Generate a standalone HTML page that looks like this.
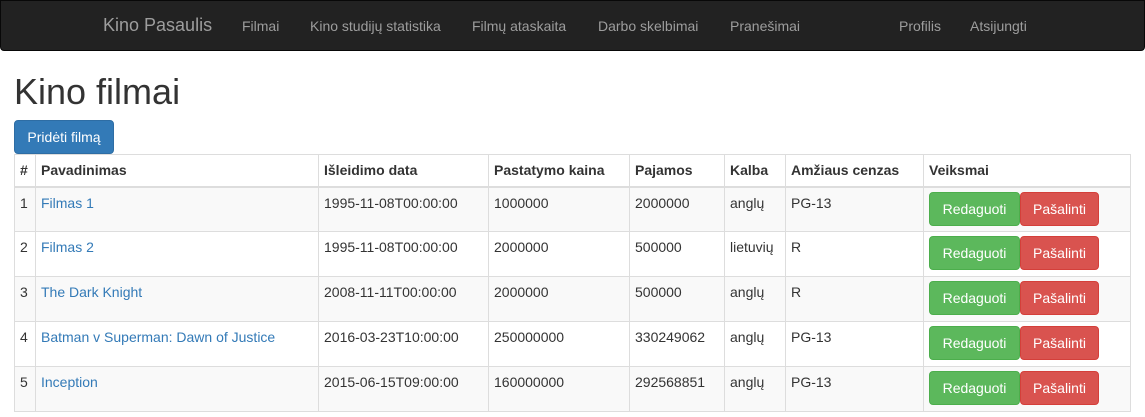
<!DOCTYPE html>
<html><head><meta charset="utf-8"><style>
*{box-sizing:border-box}
body{margin:0;font-family:"Liberation Sans",Arial,sans-serif;font-size:14px;color:#333;background:#fff;width:1145px;height:417px;overflow:hidden;position:relative}
.nav{position:absolute;left:0;top:0;width:1145px;height:51px;background:#222;border:1px solid #080808;border-radius:0 0 4px 4px}
.nav span{position:absolute;top:16px;color:#9d9d9d;font-size:14px;line-height:18px;white-space:nowrap}
.nav .brand{font-size:18px;top:15px}
h1{position:absolute;left:14px;top:72px;margin:0;font-size:36px;font-weight:500;line-height:40px}
.add{position:absolute;left:14px;top:120px;width:100px;height:34px;background:#337ab7;border:1px solid #2e6da4;border-radius:4px;color:#fff;line-height:32px;text-align:center}
table{position:absolute;left:14px;top:154px;width:1117px;border-collapse:collapse;border:1px solid #ddd}
th,td{border:1px solid #ddd;padding:6px 5px 8px;text-align:left;vertical-align:top;line-height:18px;white-space:nowrap}
th{border-bottom:2px solid #ddd;height:32px;padding:6px 5px}
td{height:45px}
tr.s td{background:#f9f9f9}
a{color:#337ab7;text-decoration:none}
td.b{padding:4px 5px 0 5px}
.btn{display:inline-block;height:34px;line-height:32px;border-radius:4px;color:#fff;text-align:center;vertical-align:top}
.g{width:91px;background:#5cb85c;border:1px solid #4cae4c}
.r{width:79px;background:#d9534f;border:1px solid #d43f3a}
</style></head><body>
<div class="nav">
<span class="brand" style="left:102px">Kino Pasaulis</span>
<span style="left:241px">Filmai</span>
<span style="left:309px">Kino studijų statistika</span>
<span style="left:471px">Filmų ataskaita</span>
<span style="left:597px">Darbo skelbimai</span>
<span style="left:729px">Pranešimai</span>
<span style="left:898px">Profilis</span>
<span style="left:969px">Atsijungti</span>
</div>
<h1>Kino filmai</h1>
<div class="add">Pridėti filmą</div>
<table>
<colgroup><col style="width:21px"><col style="width:283px"><col style="width:170px"><col style="width:141px"><col style="width:95px"><col style="width:61px"><col style="width:138px"><col></colgroup>
<tr><th>#</th><th>Pavadinimas</th><th>Išleidimo data</th><th>Pastatymo kaina</th><th>Pajamos</th><th>Kalba</th><th>Amžiaus cenzas</th><th>Veiksmai</th></tr>
<tr class="s"><td>1</td><td><a>Filmas 1</a></td><td>1995-11-08T00:00:00</td><td>1000000</td><td>2000000</td><td>anglų</td><td>PG-13</td><td class="b"><span class="btn g">Redaguoti</span><span class="btn r">Pašalinti</span></td></tr>
<tr><td>2</td><td><a>Filmas 2</a></td><td>1995-11-08T00:00:00</td><td>2000000</td><td>500000</td><td>lietuvių</td><td>R</td><td class="b"><span class="btn g">Redaguoti</span><span class="btn r">Pašalinti</span></td></tr>
<tr class="s"><td>3</td><td><a>The Dark Knight</a></td><td>2008-11-11T00:00:00</td><td>2000000</td><td>500000</td><td>anglų</td><td>R</td><td class="b"><span class="btn g">Redaguoti</span><span class="btn r">Pašalinti</span></td></tr>
<tr><td>4</td><td><a>Batman v Superman: Dawn of Justice</a></td><td>2016-03-23T10:00:00</td><td>250000000</td><td>330249062</td><td>anglų</td><td>PG-13</td><td class="b"><span class="btn g">Redaguoti</span><span class="btn r">Pašalinti</span></td></tr>
<tr class="s"><td>5</td><td><a>Inception</a></td><td>2015-06-15T09:00:00</td><td>160000000</td><td>292568851</td><td>anglų</td><td>PG-13</td><td class="b"><span class="btn g">Redaguoti</span><span class="btn r">Pašalinti</span></td></tr>
</table>
</body></html>
